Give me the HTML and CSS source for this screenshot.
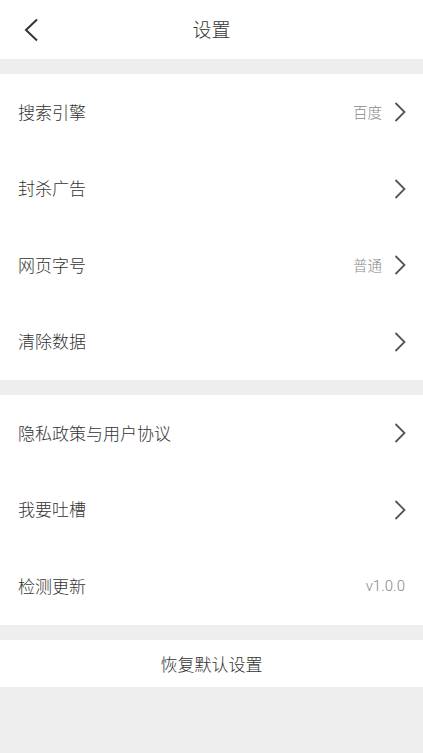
FILE: index.html
```html
<!DOCTYPE html>
<html lang="zh">
<head>
<meta charset="utf-8">
<link rel="stylesheet" href="styles.css">
</head>
<body>
<div class="page">
  <header class="topbar">
    <span class="back">
      <svg width="16" height="24" viewBox="0 0 16 24"><path d="M14 1.5 L3 12 L14 22.5" fill="none" stroke="#333" stroke-width="2"/></svg>
    </span>
    <span class="title">设置</span>
  </header>
  <div class="gap"></div>
  <section class="group">
    <div class="row"><span class="label">搜索引擎</span><span class="right"><span class="value">百度</span><svg class="chev" width="12" height="20" viewBox="0 0 12 20"><path d="M1.5 1 L10.5 10 L1.5 19" fill="none" stroke="#555" stroke-width="1.8"/></svg></span></div>
    <div class="row"><span class="label">封杀广告</span><span class="right"><svg class="chev" width="12" height="20" viewBox="0 0 12 20"><path d="M1.5 1 L10.5 10 L1.5 19" fill="none" stroke="#555" stroke-width="1.8"/></svg></span></div>
    <div class="row"><span class="label">网页字号</span><span class="right"><span class="value">普通</span><svg class="chev" width="12" height="20" viewBox="0 0 12 20"><path d="M1.5 1 L10.5 10 L1.5 19" fill="none" stroke="#555" stroke-width="1.8"/></svg></span></div>
    <div class="row"><span class="label">清除数据</span><span class="right"><svg class="chev" width="12" height="20" viewBox="0 0 12 20"><path d="M1.5 1 L10.5 10 L1.5 19" fill="none" stroke="#555" stroke-width="1.8"/></svg></span></div>
  </section>
  <div class="gap"></div>
  <section class="group">
    <div class="row"><span class="label">隐私政策与用户协议</span><span class="right"><svg class="chev" width="12" height="20" viewBox="0 0 12 20"><path d="M1.5 1 L10.5 10 L1.5 19" fill="none" stroke="#555" stroke-width="1.8"/></svg></span></div>
    <div class="row"><span class="label">我要吐槽</span><span class="right"><svg class="chev" width="12" height="20" viewBox="0 0 12 20"><path d="M1.5 1 L10.5 10 L1.5 19" fill="none" stroke="#555" stroke-width="1.8"/></svg></span></div>
    <div class="row"><span class="label">检测更新</span><span class="right"><span class="value version">v1.0.0</span></span></div>
  </section>
  <div class="gap"></div>
  <div class="reset">恢复默认设置</div>
</div>
</body>
</html>
```
FILE: styles.css
```css
* { box-sizing: border-box; }
html, body {
  margin: 0;
  padding: 0;
  background: #eeeeee;
  font-family: "Noto Sans CJK SC", "Noto Sans", sans-serif;
  color: #333;
}
.page {
  width: 423px;
  min-height: 753px;
  background: #eeeeee;
}
.topbar {
  height: 59px;
  background: #fff;
  position: relative;
  display: flex;
  align-items: center;
  justify-content: center;
}
.back {
  position: absolute;
  left: 23px;
  top: 18px;
  width: 16px;
  height: 24px;
  display: block;
}
.back svg { display: block; }
.title {
  font-size: 19px;
  font-weight: 300;
  color: #333;
  line-height: 1;
  margin-top: -2px;
}
.gap { height: 15px; }
.group { background: #fff; }
.row {
  height: 76.5px;
  display: flex;
  align-items: center;
  justify-content: space-between;
  padding: 0 17px 0 18px;
}
.label {
  font-size: 17px;
  font-weight: 300;
  color: #333;
  line-height: 1;
  margin-top: -2px;
}
.right {
  display: flex;
  align-items: center;
}
.value {
  font-size: 14.5px;
  font-weight: 300;
  color: #888;
  margin-right: 12px;
  line-height: 1;
}
.value.version {
  margin-right: 1px;
  font-family: Roboto, "Noto Sans", sans-serif;
  font-size: 15px;
  font-weight: 300;
  color: #888;
}
.chev { display: block; }
.reset {
  height: 47px;
  background: #fff;
  display: flex;
  align-items: center;
  justify-content: center;
  font-size: 17px;
  font-weight: 300;
  color: #333;
}
```
